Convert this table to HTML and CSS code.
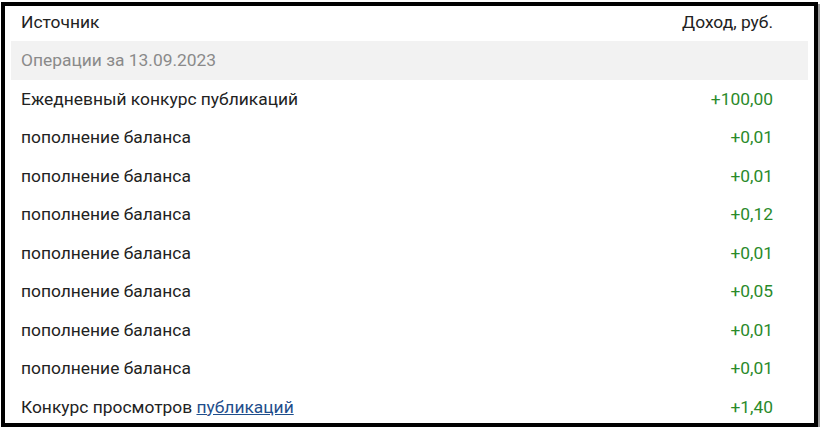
FILE: index.html
```html
<!DOCTYPE html>
<html lang="ru">
<head>
<meta charset="utf-8">
<link rel="stylesheet" href="styles.css">
</head>
<body>
<div class="frame">
  <div class="row head"><span>Источник</span><span class="amt">Доход, руб.</span></div>
  <div class="row group"><span>Операции за 13.09.2023</span></div>
  <div class="row"><span>Ежедневный конкурс публикаций</span><span class="amt plus">+100,00</span></div>
  <div class="row"><span>пополнение баланса</span><span class="amt plus">+0,01</span></div>
  <div class="row"><span>пополнение баланса</span><span class="amt plus">+0,01</span></div>
  <div class="row"><span>пополнение баланса</span><span class="amt plus">+0,12</span></div>
  <div class="row"><span>пополнение баланса</span><span class="amt plus">+0,01</span></div>
  <div class="row"><span>пополнение баланса</span><span class="amt plus">+0,05</span></div>
  <div class="row"><span>пополнение баланса</span><span class="amt plus">+0,01</span></div>
  <div class="row"><span>пополнение баланса</span><span class="amt plus">+0,01</span></div>
  <div class="row"><span>Конкурс просмотров <a href="#" class="link">публикаций</a></span><span class="amt plus">+1,40</span></div>
</div>
</body>
</html>
```
FILE: styles.css
```css
html, body { margin: 0; padding: 0; background: #fff; }
body { font-family: Roboto, "Noto Sans", sans-serif; font-size: 17.4px; color: #222; }
.frame {
  margin: 2px 0 0 1px;
  width: 797px;
  height: 417px;
  border: 4px solid #000;
  box-shadow: 2px 2px 0 #9a9a9a;
  padding: 0 6px;
  box-sizing: content-box;
  display: flex;
  flex-direction: column;
  overflow: hidden;
}
.row {
  display: flex;
  justify-content: space-between;
  align-items: center;
  height: 38.5px;
  padding: 0 35px 0 10px;
  flex: none;
  box-sizing: border-box;
}
.row.head { height: 35px; padding-bottom: 4px; }
.row.group { background: #f2f2f2; color: #8a8a8a; }
.amt { text-align: right; }
.plus { color: #2a8a2a; }
.link { color: #1f4e8c; text-decoration: underline; }
```
